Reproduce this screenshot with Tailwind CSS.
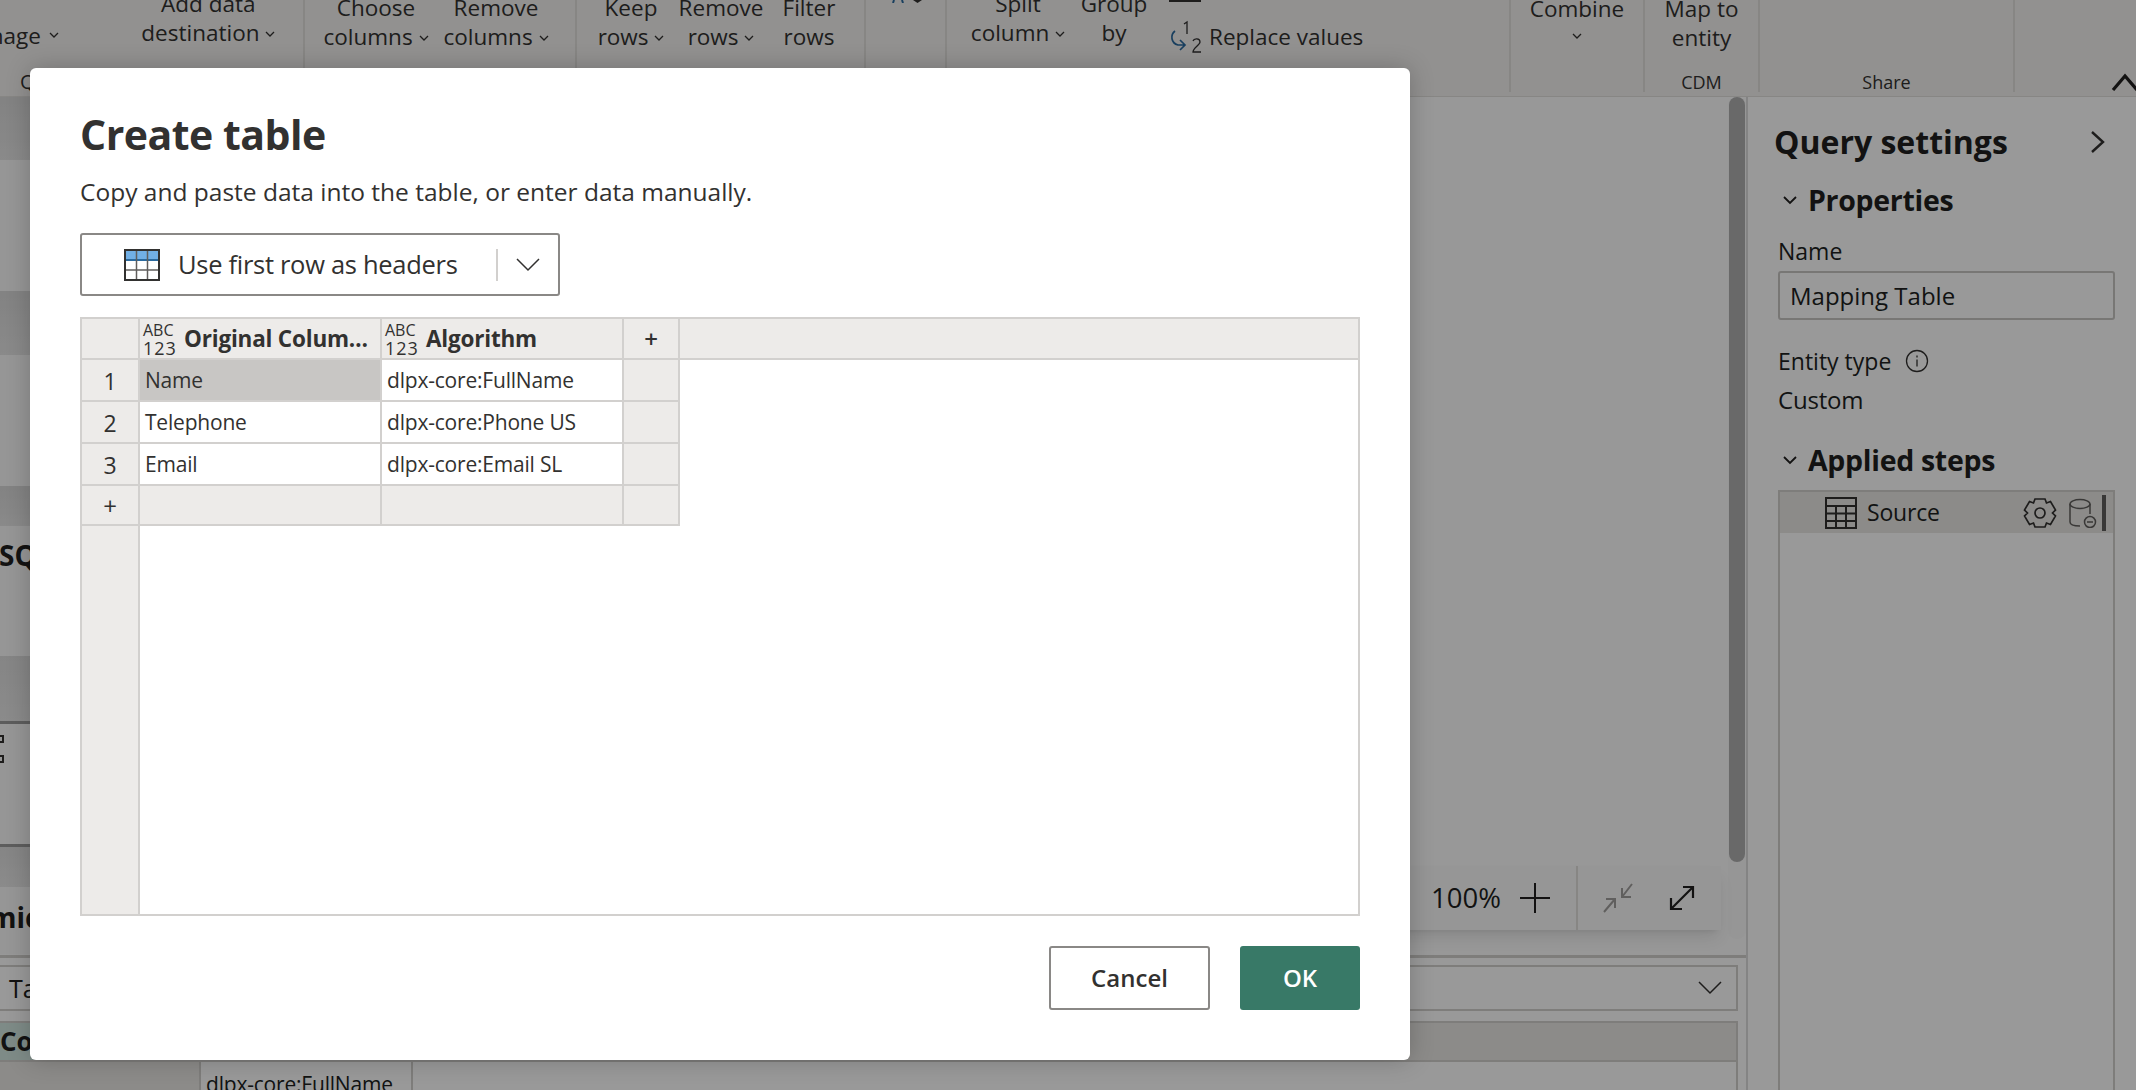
<!DOCTYPE html>
<html lang="en">
<head>
<meta charset="UTF-8">
<title>Create table</title>
<script src="https://cdn.jsdelivr.net/npm/@tailwindcss/browser@4"></script>
</head>
<body class="relative w-[2136px] h-[1090px] overflow-hidden bg-white text-[#323130] font-['Open_Sans',sans-serif]">

<!-- Ribbon -->
<header class="flex h-[97px] bg-[#f3f2f1] border-b border-[#e1dfdd] overflow-hidden text-[22.5px] leading-[29px]">
  <div class="relative w-[305px] h-[92px] border-r-2 border-[#e1dfdd] flex">
    <div class="ml-[-43px] w-[110px] mt-[21px] flex items-center gap-[8px] h-[29px]">Manage
      <svg class="w-[10px] h-[7px]" viewBox="0 0 10 7" fill="none" stroke="#323130" stroke-width="1.3"><path d="M1 1l4 4 4-4"/></svg>
    </div>
    <div class="ml-[47px] w-[190px] mt-[-11px] text-center">Add data<br>destination <svg class="inline w-[10px] h-[7px]" viewBox="0 0 10 7" fill="none" stroke="#323130" stroke-width="1.3"><path d="M1 1l4 4 4-4"/></svg></div>
    <span class="absolute left-[20px] bottom-[-4px] text-[20px]">Q</span>
  </div>
  <div class="w-[272px] h-[92px] border-r-2 border-[#e1dfdd] flex pl-[11px]">
    <div class="w-[120px] mt-[-7px] text-center">Choose<br>columns <svg class="inline w-[10px] h-[7px]" viewBox="0 0 10 7" fill="none" stroke="#323130" stroke-width="1.3"><path d="M1 1l4 4 4-4"/></svg></div>
    <div class="w-[120px] mt-[-7px] text-center">Remove<br>columns <svg class="inline w-[10px] h-[7px]" viewBox="0 0 10 7" fill="none" stroke="#323130" stroke-width="1.3"><path d="M1 1l4 4 4-4"/></svg></div>
  </div>
  <div class="w-[289px] h-[92px] border-r-2 border-[#e1dfdd] flex pl-[10px]">
    <div class="w-[88px] mt-[-7px] text-center">Keep<br>rows <svg class="inline w-[10px] h-[7px]" viewBox="0 0 10 7" fill="none" stroke="#323130" stroke-width="1.3"><path d="M1 1l4 4 4-4"/></svg></div>
    <div class="w-[92px] mt-[-7px] text-center">Remove<br>rows <svg class="inline w-[10px] h-[7px]" viewBox="0 0 10 7" fill="none" stroke="#323130" stroke-width="1.3"><path d="M1 1l4 4 4-4"/></svg></div>
    <div class="w-[84px] mt-[-7px] text-center">Filter<br>rows</div>
  </div>
  <div class="w-[81px] h-[92px] border-r-2 border-[#e1dfdd] flex items-start gap-[8px] pl-[25px]">
    <svg class="w-[14px] h-[3px]" viewBox="0 0 14 3" fill="none" stroke="#2b6a9e" stroke-width="2"><path d="M2 3l1-3M12 3l-1-3"/></svg>
    <svg class="w-[9px] h-[3px]" viewBox="0 0 9 3" fill="#323130"><path d="M0 0h9l-4.500 3z"/></svg>
  </div>
  <div class="w-[564px] h-[92px] border-r-2 border-[#e1dfdd] flex pl-[11px]">
    <div class="w-[120px] mt-[-11px] text-center">Split<br>column <svg class="inline w-[10px] h-[7px]" viewBox="0 0 10 7" fill="none" stroke="#323130" stroke-width="1.3"><path d="M1 1l4 4 4-4"/></svg></div>
    <div class="w-[72px] mt-[-11px] text-center">Group<br>by</div>
    <div class="ml-[19px] flex flex-col">
      <div class="w-[32px] h-[2px] bg-[#323130]"></div>
      <div class="flex items-center mt-[17px] gap-[6px]">
        <svg class="w-[34px] h-[34px]" viewBox="0 0 34 34" fill="none">
          <path d="M6 12c-5 4-4 12 3 14h7M11 21l5 5-5 5" stroke="#2b6a9e" stroke-width="1.700"/>
          <path d="M15 5l3-2v12" stroke="#323130" stroke-width="1.300"/>
          <path d="M24 22c1-3 7-3 7 1 0 3-7 6-7 10h8" stroke="#323130" stroke-width="1.300"/>
        </svg>
        <span>Replace values</span>
      </div>
    </div>
  </div>
  <div class="w-[134px] h-[92px] border-r-2 border-[#e1dfdd] flex flex-col items-center mt-0">
    <div class="mt-[-6px]">Combine</div>
    <svg class="mt-[10px] w-[10px] h-[7px]" viewBox="0 0 10 7" fill="none" stroke="#323130" stroke-width="1.3"><path d="M1 1l4 4 4-4"/></svg>
  </div>
  <div class="w-[115px] h-[92px] border-r-2 border-[#e1dfdd] flex flex-col items-center justify-between">
    <div class="mt-[-6px] text-center">Map to<br>entity</div>
    <div class="text-[18px] leading-[22px] mb-[-1px]">CDM</div>
  </div>
  <div class="w-[255px] h-[92px] border-r-2 border-[#e1dfdd] flex flex-col items-center justify-end">
    <div class="text-[18px] leading-[22px] mb-[-1px]">Share</div>
  </div>
  <div class="flex-1 h-[92px] flex items-end justify-end">
    <svg class="w-[28px] h-[18px] mb-[1px] mr-[-3px]" viewBox="0 0 28 18" fill="none" stroke="#201f1e" stroke-width="3.200"><path d="M2 17L14 3l12 14"/></svg>
  </div>
</header>

<div class="flex h-[993px]">
  <!-- Editor column -->
  <main class="w-[1748px] shrink-0 border-r-2 border-[#dcdcdc] flex flex-col">
    <!-- Diagram canvas -->
    <section class="relative h-[858px] bg-[#fdfdfd] flex flex-col">
      <div class="h-[63px] bg-gradient-to-b from-[#dadada] to-[#e6e6e6] w-[200px]"></div>
      <div class="h-[131px] w-[200px] bg-[#fbfbfb]"></div>
      <div class="h-[64px] bg-gradient-to-b from-[#dadada] to-[#e6e6e6] w-[200px]"></div>
      <div class="h-[131px] w-[200px] bg-[#fbfbfb]"></div>
      <div class="h-[40px] bg-gradient-to-b from-[#dadada] to-[#e6e6e6] w-[200px]"></div>
      <div class="h-[130px] w-[200px] bg-[#fbfbfb] pt-[11px] pl-0 text-[28px] leading-[36px] font-bold text-[#201f1e] overflow-hidden"><span class="ml-[-1px]">SQL</span></div>
      <div class="h-[65px] w-[200px] bg-gradient-to-b from-[#dedede] to-[#e8e8e8]"></div>
      <div class="h-[126px] w-[200px] border-y-[3px] border-[#9b9b9b] bg-[#fbfbfb] pt-[11px] flex flex-col gap-[12px]">
        <div class="w-[4px] h-[8px] border-2 border-l-0 border-[#323130]"></div>
        <div class="w-[4px] h-[8px] border-2 border-l-0 border-[#323130]"></div>
      </div>
      <div class="h-[40px] w-[200px] bg-gradient-to-b from-[#dedede] to-[#e8e8e8]"></div>
      <div class="h-[67px] w-[200px] bg-[#fbfbfb] pt-[12px] text-[28px] leading-[36px] font-bold text-[#201f1e] overflow-hidden whitespace-nowrap"><span class="ml-[-83px]">Dynamic</span></div>

      <!-- Scrollbar -->
      <div class="absolute right-0 top-0 w-[18px] h-[842px] bg-[#fafafa] rounded-full">
        <div class="h-[765px] mx-[1px] bg-[#b0b0b0] rounded-full"></div>
      </div>

      <!-- Zoom controls -->
      <div class="absolute right-[25px] top-[769px] h-[64px] w-[400px] bg-[#fbfbfb] shadow-lg flex items-center justify-end">
        <span class="text-[27.5px] text-[#201f1e]">100%</span>
        <svg class="ml-[18px] w-[32px] h-[32px]" viewBox="0 0 32 32" stroke="#201f1e" stroke-width="2"><path d="M1 16h30M16 1v30"/></svg>
        <div class="ml-[25px] w-[2px] h-full bg-[#e1dfdd]"></div>
        <svg class="ml-[24px] w-[32px] h-[32px]" viewBox="0 0 32 32" fill="none" stroke="#a19f9d" stroke-width="2"><path d="M30 2L20 15M20 6v9h9M2 30L13 17M13 26v-9H4"/></svg>
        <svg class="ml-[34px] w-[28px] h-[28px] mr-[25px]" viewBox="0 0 28 28" fill="none" stroke="#201f1e" stroke-width="2.200"><path d="M3 25L25 3M15 3h10v11M3 14v11h11"/></svg>
      </div>
    </section>

    <!-- Bottom data pane -->
    <section class="flex-1 border-t-[3px] border-[#d2d0ce] pt-[7px] pr-[8px] overflow-hidden">
      <div class="h-[46px] border-2 border-l-0 border-[#d2d0ce] bg-white flex items-center justify-between">
        <span class="pl-[9px] text-[25px] leading-[42px] text-[#201f1e]">Table</span>
        <svg class="mr-[14px] w-[24px] h-[14px]" viewBox="0 0 24 14" fill="none" stroke="#323130" stroke-width="1.500"><path d="M1 1l11 11L23 1"/></svg>
      </div>
      <div class="mt-[10px] h-[41px] border-2 border-l-0 border-[#d2d0ce] bg-[#e9e8e4] flex items-center">
        <div class="w-[199px] h-full bg-[#d2e8e2] text-[26px] leading-[37px] font-bold text-[#201f1e]">Col</div>
      </div>
      <div class="flex h-[40px] bg-white border-r-2 border-[#d2d0ce]">
        <div class="w-[199px] bg-[#e9e8e4]"></div>
        <div class="w-[214px] border-x-2 border-[#d2d0ce] pl-[5px] pt-[8px] text-[21px] leading-[28px] tracking-[-0.2px] text-[#201f1e]">dlpx-core:FullName</div>
      </div>
    </section>
  </main>

  <!-- Query settings -->
  <aside class="flex-1 flex flex-col pl-[30px] pr-[21px] bg-white text-[#201f1e]">
    <div class="flex items-center justify-between h-[68px] mt-[11px] ml-[-4px]">
      <h2 class="text-[32px] font-bold">Query settings</h2>
      <svg class="mr-[9px] w-[16px] h-[24px]" viewBox="0 0 16 24" fill="none" stroke="#323130" stroke-width="2.400"><path d="M2 2l11 10L2 22"/></svg>
    </div>
    <div class="flex items-center gap-[11px] h-[36px] mt-[6px] ml-[5px]">
      <svg class="w-[14px] h-[9px]" viewBox="0 0 14 9" fill="none" stroke="#201f1e" stroke-width="1.800"><path d="M1 1l6 6 6-6"/></svg>
      <h3 class="text-[28.5px] font-bold tracking-[-0.3px]">Properties</h3>
    </div>
    <label class="mt-[18px] text-[23px] leading-[30px]">Name</label>
    <div class="mt-[5px] h-[49px] border-2 border-[#c8c6c4] rounded-[3px] pl-[10px] flex items-center text-[24px]">Mapping Table</div>
    <div class="mt-[26px] flex items-center gap-[14px] text-[23px] leading-[30px]">Entity type
      <svg class="w-[24px] h-[24px]" viewBox="0 0 24 24" fill="none" stroke="#323130" stroke-width="1.300"><circle cx="12" cy="12" r="10.500"/><path d="M12 10.500v7M12 6.500v2"/></svg>
    </div>
    <div class="mt-[7px] text-[24px] leading-[34px] tracking-[-0.2px]">Custom</div>
    <div class="flex items-center gap-[11px] h-[36px] mt-[25px] ml-[5px]">
      <svg class="w-[14px] h-[9px]" viewBox="0 0 14 9" fill="none" stroke="#201f1e" stroke-width="1.800"><path d="M1 1l6 6 6-6"/></svg>
      <h3 class="text-[28.5px] font-bold tracking-[-0.3px]">Applied steps</h3>
    </div>
    <div class="mt-[12px] flex-1 border-2 border-b-0 border-[#d2d0ce]">
      <div class="h-[41px] bg-[#e9e8e4] flex items-center pl-[45px]">
        <svg class="w-[32px] h-[32px] shrink-0" viewBox="0 0 32 32" fill="none" stroke="#323130" stroke-width="2"><path d="M1 1h30v30H1zM1 9h30M1 16.500h30M1 24h30M11 9v22M21 9v22"/></svg>
        <span class="ml-[10px] w-[72px] text-[23px] tracking-[-0.2px]">Source</span>
        <svg class="ml-[84px] w-[34px] h-[32px] shrink-0" viewBox="0 0 34 32" fill="none" stroke="#323130" stroke-width="1.700"><path d="M12 2h10l1.500 4 4-1.500 5 8.500-3 3 3 3-5 8.500-4-1.500L22 30H12l-1.500-4-4 1.500-5-8.500 3-3-3-3 5-8.500 4 1.500z"/><circle cx="17" cy="16" r="5"/></svg>
        <svg class="ml-[12px] w-[28px] h-[30px] shrink-0" viewBox="0 0 28 30" fill="none" stroke="#605e5c" stroke-width="1.500"><ellipse cx="11" cy="6" rx="10" ry="4.500"/><path d="M1 6v18c0 3 3 4 10 4M21 6v10"/><circle cx="21" cy="24" r="5.500"/><path d="M18 24h6"/></svg>
        <div class="ml-[5px] w-[4px] h-[36px] shrink-0 bg-[#605e5c]"></div>
      </div>
    </div>
  </aside>
</div>

<!-- Dim layer -->
<div class="absolute inset-0 bg-black/40"></div>

<!-- Dialog -->
<div class="absolute left-[30px] top-[68px] w-[1380px] h-[992px] bg-white rounded-[6px] shadow-[0_0_24px_rgba(0,0,0,0.22)] px-[50px] flex flex-col">
  <h1 class="mt-[37px] text-[41px] leading-[58px] font-bold tracking-[-0.5px]">Create table</h1>
  <p class="mt-[12px] text-[24.5px] leading-[33px]">Copy and paste data into the table, or enter data manually.</p>

  <div class="mt-[25px] w-[480px] h-[63px] border-2 border-[#8a8886] rounded-[3px] flex items-center pl-[42px]">
    <svg class="w-[36px] h-[32px]" viewBox="0 0 36 32" fill="none">
      <rect x="1" y="1" width="34" height="30" fill="#fff"/>
      <rect x="1" y="1" width="34" height="10" fill="#71afe5"/>
      <path d="M1 11h34" stroke="#2b6a9e" stroke-width="2"/>
      <path d="M1 21h34M12.500 1v30M23.500 1v30" stroke="#605e5c" stroke-width="1.500"/>
      <rect x="1" y="1" width="34" height="30" stroke="#323130" stroke-width="2"/>
    </svg>
    <span class="ml-[18px] w-[318px] text-[25.5px] tracking-[-0.3px]">Use first row as headers</span>
    <div class="w-[2px] h-[32px] bg-[#d2d0ce]"></div>
    <svg class="ml-[18px] w-[24px] h-[14px]" viewBox="0 0 24 14" fill="none" stroke="#323130" stroke-width="1.500"><path d="M1 1l11 11L23 1"/></svg>
  </div>

  <!-- Data grid -->
  <div class="mt-[21px] h-[599px] border-x-2 border-y-2 border-[#d2d0ce] grid grid-cols-[58px_242px_242px_56px_1fr] grid-rows-[41px_42px_42px_42px_40px_1fr] text-[21px] tracking-[-0.2px]">
    <div class="bg-[#edebe9] border-r-2 border-b-2 border-[#d2d0ce]"></div>
    <div class="bg-[#edebe9] border-r-2 border-b-2 border-[#d2d0ce] flex items-center pl-[3px] gap-[8px] overflow-hidden">
      <div class="w-[33px] shrink-0 text-[16px] leading-[18px] tracking-normal"><div>ABC</div><div class="text-[18px] tracking-[1px]">123</div></div>
      <span class="font-bold text-[22.5px] whitespace-nowrap">Original Colum…</span>
    </div>
    <div class="bg-[#edebe9] border-r-2 border-b-2 border-[#d2d0ce] flex items-center pl-[3px] gap-[8px]">
      <div class="w-[33px] shrink-0 text-[16px] leading-[18px] tracking-normal"><div>ABC</div><div class="text-[18px] tracking-[1px]">123</div></div>
      <span class="font-bold text-[22.5px]">Algorithm</span>
    </div>
    <div class="bg-[#edebe9] border-r-2 border-b-2 border-[#d2d0ce] flex items-center justify-center text-[24px] font-semibold">+</div>
    <div class="bg-[#edebe9] border-b-2 border-[#d2d0ce]"></div>

    <div class="bg-[#edebe9] border-r-2 border-b-2 border-[#d2d0ce] flex items-center justify-center pt-[2px] text-[23px]">1</div>
    <div class="bg-[#c8c6c4] border-r-2 border-b-2 border-[#d2d0ce] flex items-center pl-[5px] pt-[2px]">Name</div>
    <div class="border-r-2 border-b-2 border-[#d2d0ce] flex items-center pl-[5px] pt-[2px]">dlpx-core:FullName</div>
    <div class="bg-[#edebe9] border-r-2 border-b-2 border-[#d2d0ce]"></div>
    <div></div>

    <div class="bg-[#edebe9] border-r-2 border-b-2 border-[#d2d0ce] flex items-center justify-center pt-[2px] text-[23px]">2</div>
    <div class="border-r-2 border-b-2 border-[#d2d0ce] flex items-center pl-[5px] pt-[2px]">Telephone</div>
    <div class="border-r-2 border-b-2 border-[#d2d0ce] flex items-center pl-[5px] pt-[2px]">dlpx-core:Phone US</div>
    <div class="bg-[#edebe9] border-r-2 border-b-2 border-[#d2d0ce]"></div>
    <div></div>

    <div class="bg-[#edebe9] border-r-2 border-b-2 border-[#d2d0ce] flex items-center justify-center pt-[2px] text-[23px]">3</div>
    <div class="border-r-2 border-b-2 border-[#d2d0ce] flex items-center pl-[5px] pt-[2px]">Email</div>
    <div class="border-r-2 border-b-2 border-[#d2d0ce] flex items-center pl-[5px] pt-[2px]">dlpx-core:Email SL</div>
    <div class="bg-[#edebe9] border-r-2 border-b-2 border-[#d2d0ce]"></div>
    <div></div>

    <div class="bg-[#edebe9] border-r-2 border-b-2 border-[#d2d0ce] flex items-center justify-center pt-[2px] text-[24px]">+</div>
    <div class="bg-[#edebe9] border-r-2 border-b-2 border-[#d2d0ce]"></div>
    <div class="bg-[#edebe9] border-r-2 border-b-2 border-[#d2d0ce]"></div>
    <div class="bg-[#edebe9] border-r-2 border-b-2 border-[#d2d0ce]"></div>
    <div></div>

    <div class="bg-[#edebe9] border-r-2 border-[#d2d0ce]"></div>
  </div>

  <div class="mt-[30px] flex justify-end gap-[30px]">
    <button class="w-[161px] h-[64px] border-2 border-[#8a8886] rounded-[3px] text-[24px] font-semibold">Cancel</button>
    <button class="w-[120px] h-[64px] bg-[#387967] rounded-[3px] text-white text-[24px] font-semibold">OK</button>
  </div>
</div>

</body>
</html>
